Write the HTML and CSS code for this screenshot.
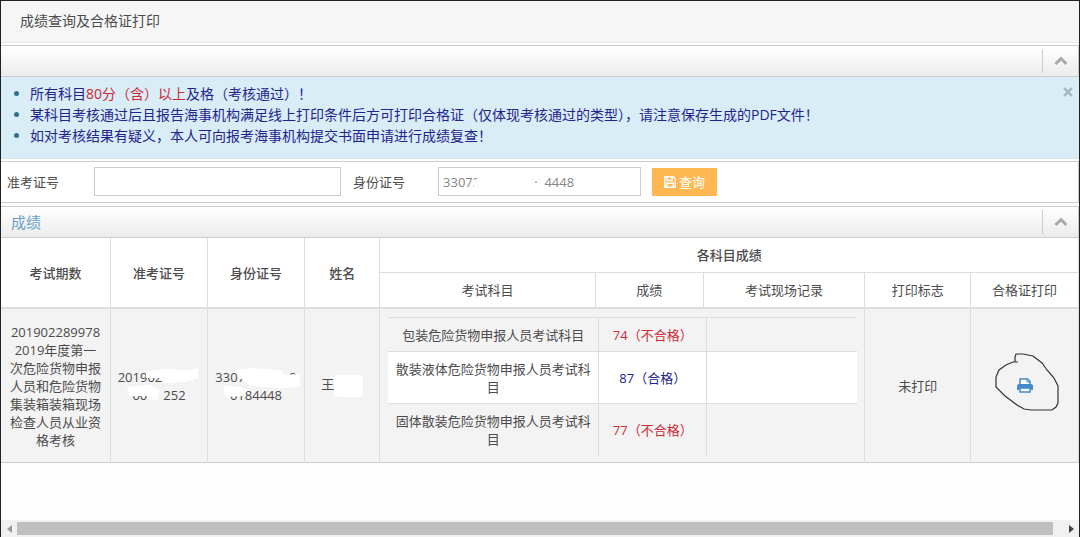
FILE: index.html
```html
<!DOCTYPE html>
<html lang="zh-CN">
<head>
<meta charset="utf-8">
<title>成绩查询及合格证打印</title>
<link rel="stylesheet" href="styles.css">
</head>
<body>
<main class="page">
  <header class="title-bar"><h1 class="title">成绩查询及合格证打印</h1></header>

  <section class="panel">
    <div class="panel-head">
      <button class="collapse" type="button" aria-label="收起"><svg width="14" height="10" viewBox="0 0 14 10"><path d="M1.5 8 7 2.6 12.5 8" fill="none" stroke="currentColor" stroke-width="3"/></svg></button>
    </div>
    <div class="alert">
      <ul class="notes">
        <li>所有科目<span class="fail">80分（含）以上</span>及格（考核通过）！</li>
        <li>某科目考核通过后且报告海事机构满足线上打印条件后方可打印合格证（仅体现考核通过的类型），请注意保存生成的PDF文件！</li>
        <li>如对考核结果有疑义，本人可向报考海事机构提交书面申请进行成绩复查！</li>
      </ul>
      <button class="close" type="button" aria-label="关闭"><svg width="10" height="10" viewBox="0 0 10 10"><path d="M1.2 1.2 8.8 8.8M8.8 1.2 1.2 8.8" stroke="currentColor" stroke-width="2.6"/></svg></button>
    </div>
  </section>

  <form class="search">
    <label class="label" for="ticket">准考证号</label>
    <input class="field field-ticket" id="ticket" type="text">
    <label class="label" for="idno">身份证号</label>
    <span class="field-wrap"><input class="field" id="idno" type="text" value="33072                ·  4448"><span class="field-mask"></span></span>
    <button class="submit" type="button"><svg width="12" height="12" viewBox="0 0 12 12"><path d="M.8.8h8.4l2 2v8.400H.8z" fill="none" stroke="currentColor" stroke-width="1.4"/><path d="M3 1v3.500h5V1M2.800 11V7.300h6.400V11" fill="none" stroke="currentColor" stroke-width="1.400"/></svg>查询</button>
  </form>

  <section class="panel">
    <div class="panel-head">
      <h2 class="panel-title">成绩</h2>
      <button class="collapse" type="button" aria-label="收起"><svg width="14" height="10" viewBox="0 0 14 10"><path d="M1.5 8 7 2.6 12.5 8" fill="none" stroke="currentColor" stroke-width="3"/></svg></button>
    </div>
    <table class="results">
      <colgroup><col class="w-first"><col class="w9"><col class="w9"><col class="w7"><col class="w20"><col class="w10"><col class="w15"><col class="w-flag"><col class="w10"></colgroup>
      <thead>
        <tr><th rowspan="2">考试期数</th><th rowspan="2">准考证号</th><th rowspan="2">身份证号</th><th rowspan="2">姓名</th><th colspan="5" class="group">各科目成绩</th></tr>
        <tr class="sub"><th>考试科目</th><th>成绩</th><th>考试现场记录</th><th>打印标志</th><th>合格证打印</th></tr>
      </thead>
      <tbody>
        <tr>
          <td class="period">201902289978<br>2019年度第一次危险货物申报人员和危险货物集装箱装箱现场检查人员从业资格考核</td>
          <td><div class="redacted">201902<span class="gap"></span><br>00<span class="gap-small"></span>252
            <svg class="mask" width="88" height="36" viewBox="0 0 88 36"><path d="M31 3 51 1 74 2 83 0V10L72 14 50 15 45 10 31 10Z"/><path d="M12 19 35 17 45 23 43 32 35 31 32 28H14Z"/></svg></div></td>
          <td><div class="redacted">3307<span class="gap-id"></span>8<br>0184448
            <svg class="mask" width="88" height="36" viewBox="0 0 88 36"><path d="M25 2 40 0 69 2 73 7 88 6V19L73 20 39 18 30 11 26 10Z"/><path d="M12 18 29 19 36 22 31 28 13 29Z"/></svg></div></td>
          <td class="person">王<span class="name-mask"></span></td>
          <td colspan="3" class="nest">
            <table class="subjects">
              <colgroup><col class="w45"><col class="w23"><col class="w32"></colgroup>
              <tbody>
                <tr><td>包装危险货物申报人员考试科目</td><td class="fail">74（不合格）</td><td></td></tr>
                <tr class="light"><td>散装液体危险货物申报人员考试科目</td><td class="pass">87（合格）</td><td></td></tr>
                <tr><td>固体散装危险货物申报人员考试科目</td><td class="fail">77（不合格）</td><td></td></tr>
              </tbody>
            </table>
          </td>
          <td>未打印</td>
          <td><div class="print-cell">
            <a class="print" href="#" aria-label="打印合格证"><svg width="16" height="15" viewBox="0 0 16 15"><path d="M3 6.500V1h7.500L13 3.500v3" fill="#fff" stroke="currentColor" stroke-width="1.500"/><path d="M10 1v3h3" fill="none" stroke="currentColor"/><path d="M2 6h12q2 0 2 2v4h-2.500V10h-11v2H0V8q0-2 2-2z" fill="currentColor"/><path d="M3 10h10v4H3z" fill="#fff" stroke="currentColor" stroke-width="1.500"/></svg></a>
            <svg class="circle" width="66" height="60" viewBox="0 0 66 60"><path d="M24 10H19L12 13 5 18 2 25V35L11 44 23 53 30 57 37 58H58L62 55 64 51V34L60 26 53 18 48 11 39 4 29 2H22L21 5V10" fill="none" stroke="#333" stroke-width="1.200"/></svg>
          </div></td>
        </tr>
      </tbody>
    </table>
  </section>

  <div class="scroll" aria-hidden="true">
    <span class="arrow"><svg width="5" height="8" viewBox="0 0 5 8"><path d="M5 0V8L0 4z" fill="#999"/></svg></span>
    <span class="thumb"></span>
    <span class="arrow arrow-end"><svg width="5" height="8" viewBox="0 0 5 8"><path d="M0 0V8L5 4z" fill="#444"/></svg></span>
  </div>
</main>
</body>
</html>
```
FILE: styles.css
```css
* { box-sizing: border-box; }
body {
  margin: 0;
  background: #fdfdfd;
  color: #4c4c4c;
  font: 13px/18px "Open Sans", "Noto Sans CJK SC", sans-serif;
}
button { border: 0; padding: 0; background: none; font: inherit; }
svg { display: block; }
.page {
  display: flex;
  flex-direction: column;
  min-height: 100vh;
  border: 1px solid #222;
  border-bottom: 0;
}
.title-bar {
  padding: 10px 19px 11px;
  margin-bottom: 2px;
  background: #f6f6f6;
  border-bottom: 1px solid #e8e8e8;
}
.title { margin: 0; font-size: 14px; line-height: 20px; font-weight: 400; }
.panel-head {
  display: flex;
  align-items: center;
  height: 32px;
  border: 1px solid #ccc;
  border-left: 0;
  background: linear-gradient(#fff, #ececec);
}
.panel-title {
  margin: 0;
  padding-left: 10px;
  color: #669fc7;
  font-size: 15px;
  line-height: 20px;
  font-weight: 400;
}
.collapse {
  display: flex;
  align-items: center;
  justify-content: center;
  width: 36px;
  height: 24px;
  margin-left: auto;
  border-left: 1px solid #ccc;
  color: #aaa;
}
.alert {
  display: flex;
  align-items: flex-start;
  justify-content: space-between;
  padding: 6px 6px 12px 29px;
  background: #d9edf7;
  border-bottom: 1px solid #cfe6e9;
}
.notes { margin: 0; padding: 0; color: #23238e; font-size: 14px; line-height: 21px; list-style: none; }
.notes li { position: relative; }
.notes li::before {
  content: "";
  position: absolute;
  left: -16px;
  top: 8px;
  width: 5px;
  height: 5px;
  border-radius: 50%;
  background: #31708f;
}
.close { margin-top: 4px; color: #a3b9c2; }
.fail { color: #cc2a36; }
.pass { color: #23238e; }
.search {
  display: flex;
  align-items: center;
  margin: 2px 0 3px;
  padding: 5px 6px 6px;
  border: 1px solid #ccc;
  border-left: 0;
  background: #fff;
}
.label { flex: none; }
.field {
  width: 203px;
  height: 29px;
  padding: 0 4px;
  border: 1px solid #ccc;
  background: #fff;
  color: #858585;
  font: inherit;
}
.field-ticket { width: 247px; margin: 0 12px 0 35px; }
.field-wrap { position: relative; margin: 0 11px 0 33px; }
.field-mask { position: absolute; left: 37px; top: 12px; width: 8px; height: 10px; background: #fff; transform: rotate(20deg); }
.submit {
  display: flex;
  align-items: center;
  justify-content: center;
  gap: 3px;
  width: 65px;
  height: 28px;
  background: #ffb752;
  color: #fff;
}
table { width: 100%; table-layout: fixed; border-collapse: separate; border-spacing: 0; }
.w-first { width: 110px; }
.w-flag { width: 106px; }
.w7 { width: 7%; }
.w9 { width: 9%; }
.w10 { width: 10%; }
.w15 { width: 15%; }
.w20 { width: 20%; }
.w23 { width: 23%; }
.w32 { width: 32%; }
.w45 { width: 45%; }
th, td { padding: 8px; text-align: center; vertical-align: middle; overflow-wrap: anywhere; }
.results th {
  background: #fff;
  border-right: 1px solid #ddd;
  border-bottom: 2px solid #ddd;
  font-weight: 500;
}
.results th.group { border-bottom-width: 1px; }
.results .sub th { font-weight: 400; }
.results > tbody > tr > td {
  background: #f3f3f3;
  border-right: 1px solid #ddd;
  border-bottom: 1px solid #ccc;
}
.results td.nest { padding: 8px 7px 7px 8px; }
.subjects td {
  padding: 8px 4px 7px;
  border-top: 1px solid #ddd;
  border-right: 1px solid #ddd;
}
.subjects td:last-child { border-right: 0; }
.light { background: #fff; }
.redacted { position: relative; margin: 0 -4px; white-space: nowrap; }
.gap { display: inline-block; width: 38px; }
.gap-small { display: inline-block; width: 16px; }
.gap-id { display: inline-block; width: 44px; }
.mask { position: absolute; left: 0; top: 0; fill: #fff; }
.person { white-space: nowrap; }
.name-mask {
  display: inline-block;
  width: 29px;
  height: 22px;
  border-radius: 4px;
  background: #fff;
  vertical-align: middle;
}
.print-cell { position: relative; display: flex; justify-content: center; }
.print { color: #428bca; }
.circle {
  position: absolute;
  left: 50%;
  top: 50%;
  margin: -34px 0 0 -31px;
  pointer-events: none;
}
.scroll {
  display: flex;
  align-items: center;
  height: 17px;
  margin-top: auto;
  background: #f1f1f1;
}
.arrow { display: flex; justify-content: center; width: 16px; }
.arrow-end { width: 26px; justify-content: flex-end; padding-right: 5px; }
.thumb { flex: 1; height: 13px; background: #bfbfbf; }
```
